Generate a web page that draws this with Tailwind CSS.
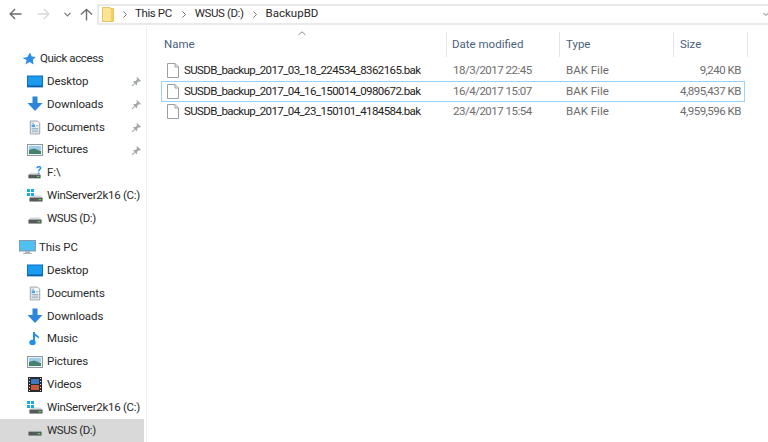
<!DOCTYPE html>
<html><head><meta charset="utf-8"><script src="https://cdn.jsdelivr.net/npm/@tailwindcss/browser@4"></script></head>
<body class="m-0">
<svg width="0" height="0" class="absolute">
<defs>
<symbol id="pin" viewBox="0 0 12 12"><path d="M6.5 1 L11 5.5 L9.8 6 L8.5 5.6 L6.6 7.6 L6.8 9.5 L6 10 L2.5 6.2 L3 5.4 L5 5.4 L6.6 3.6 L6 2z" fill="#a3a8ad"/><path d="M4 8 L1.2 10.8" stroke="#a3a8ad" stroke-width="1.2"/></symbol>
<symbol id="desk" viewBox="0 0 16 14"><rect x="0.5" y="1" width="15" height="11" fill="#1b9bf0" stroke="#0d6fc0"/><rect x="1" y="10.5" width="14" height="1.5" fill="#0a5da8"/><rect x="0" y="12" width="16" height="1" fill="#9dc4e4"/></symbol>
<symbol id="down" viewBox="0 0 16 16"><path d="M5.5 0.5 H10.5 V7 H15.5 L8 15 L0.5 7 H5.5z" fill="#2c86dc"/></symbol>
<symbol id="doc" viewBox="0 0 14 16"><path d="M1.5 0.5 H10 L12.5 3 V15.5 H1.5z" fill="#f7f9fb" stroke="#8a949c"/><path d="M3 3h3M3 9h8M3 11h8M3 13h8" stroke="#7f9db3"/><rect x="3" y="4.5" width="4" height="3" fill="#4aa3e2"/><path d="M8 6h3" stroke="#8aa0ae"/></symbol>
<symbol id="pic" viewBox="0 0 16 12"><rect x="0.5" y="0.5" width="15" height="11" fill="#eef2f5" stroke="#8f989f"/><rect x="2" y="2" width="12" height="4" fill="#9dcdea"/><path d="M2 6 L7 4.5 L14 7 V10 H2z" fill="#46806e"/></symbol>
<symbol id="drive" viewBox="0 0 16 8"><path d="M2.5 0.5 H13.5 L15.5 3.5 H0.5z" fill="#d6d9da"/><rect x="0.5" y="3" width="15" height="4.5" fill="#55595c"/><rect x="11" y="4.5" width="3" height="1.5" fill="#5ccf52"/></symbol>
<symbol id="win" viewBox="0 0 7 7"><path d="M0 0h3v3H0zM4 0h3v3H4zM0 4h3v3H0zM4 4h3v3H4z" fill="#19a9ee"/></symbol>
<symbol id="file" viewBox="0 0 12 15"><path d="M0.5 0.5 H8 L11.5 4 V14.5 H0.5z M8 0.5 V4 H11.5" fill="#fff" stroke="#9a9fa3"/></symbol>
</defs>
</svg>
<div class="w-[768px] h-[442px] overflow-hidden bg-white flex flex-col text-[11.5px] text-[#2a2a2a] whitespace-nowrap" style="font-family:Roboto,'Noto Sans',sans-serif">
  <div class="h-[26px] shrink-0 flex items-center pt-[2px]">
    <svg class="ml-[9px]" width="13" height="12" viewBox="0 0 14 13"><path d="M6.5 1 L1.2 6.5 L6.5 12 M1.2 6.5 H13.5" fill="none" stroke="#6d6d6d" stroke-width="1.5"/></svg>
    <svg class="ml-[15px]" width="13" height="12" viewBox="0 0 14 13"><path d="M7.5 1 L12.8 6.5 L7.5 12 M12.8 6.5 H0.5" fill="none" stroke="#d8d8d8" stroke-width="1.5"/></svg>
    <svg class="ml-[14px]" width="7" height="5" viewBox="0 0 7 5"><path d="M0.5 0.8 L3.5 3.8 L6.5 0.8" fill="none" stroke="#777" stroke-width="1.2"/></svg>
    <svg class="ml-[9px]" width="13" height="13" viewBox="0 0 14 13"><path d="M1 6.5 L7 1 L13 6.5 M7 1 V13" fill="none" stroke="#6d6d6d" stroke-width="1.5"/></svg>
    <div class="ml-[4px] flex-1 h-[21px] border-y-2 border-l-2 border-[#e9e9e9] flex items-center relative tracking-[-0.4px]">
      <svg class="ml-[3px] shrink-0" width="13" height="15" viewBox="0 0 13 15"><path d="M0.5 0.5 H8 V1.5 H11.5 V14.5 H0.5z" fill="#fbe594" stroke="#e5c65f"/><rect x="9" y="2" width="2" height="12" fill="#f6cf5e"/></svg>
      <svg class="ml-[8px]" width="4" height="7" viewBox="0 0 4 7"><path d="M0.5 0.5 L3.5 3.5 L0.5 6.5" fill="none" stroke="#777"/></svg>
      <span class="ml-[8px]">This PC</span>
      <svg class="ml-[10px]" width="4" height="7" viewBox="0 0 4 7"><path d="M0.5 0.5 L3.5 3.5 L0.5 6.5" fill="none" stroke="#777"/></svg>
      <span class="ml-[9px]">WSUS (D:)</span>
      <svg class="ml-[9px]" width="4" height="7" viewBox="0 0 4 7"><path d="M0.5 0.5 L3.5 3.5 L0.5 6.5" fill="none" stroke="#777"/></svg>
      <span class="ml-[9px] tracking-normal">BackupBD</span>
      <svg class="absolute right-[-1px] top-[6px]" width="6" height="5" viewBox="0 0 6 5"><path d="M0.5 1 L3 3.5 L5.5 1" fill="none" stroke="#777"/></svg>
    </div>
  </div>
  <div class="flex-1 flex min-h-0">
    <nav class="w-[147px] shrink-0 border-r border-[#f0f0f0] pt-[21.5px] tracking-[-0.1px]">
      <div class="h-[22.75px] flex items-center pl-[22px] gap-[4px]"><svg width="14" height="13" viewBox="0 0 14 13"><path d="M8 0.5 L9.8 4.6 L13.8 5 L10.8 7.8 L11.6 12.5 L7.6 10 L3.5 12.5 L4.6 8 L0.5 6 L5.4 5z" fill="#2d8fe0"/></svg><span class="tracking-[-0.4px]">Quick access</span></div>
      <div class="h-[22.75px] flex items-center pl-[27px] relative"><svg class="w-[16px] h-[14px]"><use href="#desk"/></svg><span class="ml-[4px]">Desktop</span><svg class="absolute left-[131px] top-[6px] w-[11px] h-[11px]"><use href="#pin"/></svg></div>
      <div class="h-[22.75px] flex items-center pl-[27px] relative"><svg class="w-[16px] h-[16px]"><use href="#down"/></svg><span class="ml-[4px]">Downloads</span><svg class="absolute left-[131px] top-[6px] w-[11px] h-[11px]"><use href="#pin"/></svg></div>
      <div class="h-[22.75px] flex items-center pl-[29px] relative"><svg class="w-[12px] h-[15px]"><use href="#doc"/></svg><span class="ml-[6px]">Documents</span><svg class="absolute left-[131px] top-[6px] w-[11px] h-[11px]"><use href="#pin"/></svg></div>
      <div class="h-[22.75px] flex items-center pl-[27px] relative"><svg class="w-[16px] h-[12px]"><use href="#pic"/></svg><span class="ml-[4px]">Pictures</span><svg class="absolute left-[131px] top-[6px] w-[11px] h-[11px]"><use href="#pin"/></svg></div>
      <div class="h-[22.75px] flex items-center pl-[28px] relative"><svg class="w-[13px] h-[7px] mt-[5px]"><use href="#drive"/></svg><span class="absolute left-[36px] top-[2px] text-[#1b8fe0] font-bold text-[11px]">?</span><span class="ml-[6px]">F:\</span></div>
      <div class="h-[22.75px] flex items-center pl-[27px] relative"><svg class="absolute left-[27px] top-[5px] w-[7px] h-[7px]"><use href="#win"/></svg><svg class="w-[14px] h-[7px] ml-[2px] mt-[6px]"><use href="#drive"/></svg><span class="ml-[4px] tracking-[-0.28px]">WinServer2k16 (C:)</span></div>
      <div class="h-[22.75px] flex items-center pl-[28px]"><svg class="w-[14px] h-[7px] mt-[4px]"><use href="#drive"/></svg><span class="ml-[5px] tracking-[-0.4px]">WSUS (D:)</span></div>
      <div class="h-[7px]"></div>
      <div class="h-[22.75px] flex items-center pl-[19px]"><svg width="17" height="15" viewBox="0 0 17 15"><rect x="0.5" y="0.5" width="16" height="10.5" fill="#4fc0f2" stroke="#8a99a3"/><path d="M6 11h5v2H6zM4 13h9v1H4z" fill="#aab4ba"/></svg><span class="ml-[3px]">This PC</span></div>
      <div class="h-[22.75px] flex items-center pl-[27px]"><svg class="w-[16px] h-[14px]"><use href="#desk"/></svg><span class="ml-[4px]">Desktop</span></div>
      <div class="h-[22.75px] flex items-center pl-[29px]"><svg class="w-[12px] h-[15px]"><use href="#doc"/></svg><span class="ml-[6px]">Documents</span></div>
      <div class="h-[22.75px] flex items-center pl-[27px]"><svg class="w-[16px] h-[16px]"><use href="#down"/></svg><span class="ml-[4px]">Downloads</span></div>
      <div class="h-[22.75px] flex items-center pl-[29px]"><svg width="12" height="15" viewBox="0 0 12 15"><path d="M5 1 V11" stroke="#1f8fe8" stroke-width="2"/><path d="M5 1 C6 4 11 4 10 8 C9 6 7 6 6 5z" fill="#1f8fe8"/><ellipse cx="3.5" cy="11.5" rx="3.2" ry="2.8" fill="#1f8fe8"/></svg><span class="ml-[6px]">Music</span></div>
      <div class="h-[22.75px] flex items-center pl-[27px]"><svg class="w-[16px] h-[12px]"><use href="#pic"/></svg><span class="ml-[4px]">Pictures</span></div>
      <div class="h-[22.75px] flex items-center pl-[28px]"><svg width="14" height="15" viewBox="0 0 14 15"><rect width="14" height="15" fill="#2a2a2a"/><path d="M1 1h1v1H1zM1 4h1v1H1zM1 7h1v1H1zM1 10h1v1H1zM1 13h1v1H1zM12 1h1v1h-1zM12 4h1v1h-1zM12 7h1v1h-1zM12 10h1v1h-1zM12 13h1v1h-1z" fill="#ddd"/><rect x="3" y="2" width="8" height="5" fill="#3a78c2"/><rect x="3" y="8" width="8" height="5" fill="#c8593a"/></svg><span class="ml-[5px]">Videos</span></div>
      <div class="h-[22.75px] flex items-center pl-[27px] relative"><svg class="absolute left-[27px] top-[5px] w-[7px] h-[7px]"><use href="#win"/></svg><svg class="w-[14px] h-[7px] ml-[2px] mt-[6px]"><use href="#drive"/></svg><span class="ml-[4px] tracking-[-0.28px]">WinServer2k16 (C:)</span></div>
      <div class="h-[24px] flex items-center pl-[28px] bg-[#d9d9d9] w-[144px]"><svg class="w-[14px] h-[7px] mt-[4px]"><use href="#drive"/></svg><span class="ml-[5px] tracking-[-0.4px]">WSUS (D:)</span></div>
    </nav>
    <main class="flex-1 relative pl-[14px] text-[#6d6d6d]">
      <svg class="absolute left-[151px] top-[5px]" width="8" height="5" viewBox="0 0 8 5"><path d="M0.5 4 L4 0.8 L7.5 4" fill="none" stroke="#888"/></svg>
      <div class="h-[25px] mt-[6px] grid grid-cols-[285px_113px_114px_75px] text-[#4c607a]">
        <div class="flex items-center pl-[3px]">Name</div>
        <div class="flex items-center pl-[5px] border-l border-[#e5e5e5]">Date modified</div>
        <div class="flex items-center pl-[6px] border-l border-[#e5e5e5]">Type</div>
        <div class="flex items-center pl-[6px] border-x border-[#e5e5e5]">Size</div>
      </div>
      <div class="mt-[3.5px] w-[584px]">
        <div class="h-[20.5px] border border-transparent grid grid-cols-[284px_113px_113px_72px] items-center">
          <div class="flex items-center pl-[5px] gap-[5px] text-[#222]"><svg class="w-[12px] h-[15px] shrink-0"><use href="#file"/></svg><span class="tracking-[-0.6px]">SUSDB_backup_2017_03_18_224534_8362165.bak</span></div><div class="pl-[7px] tracking-[-0.5px]">18/3/2017 22:45</div><div class="pl-[7px]">BAK File</div><div class="text-right pr-[3px] tracking-[-0.5px]">9,240 KB</div>
        </div>
        <div class="h-[20.5px] border border-[#99d1ff] grid grid-cols-[284px_113px_113px_72px] items-center">
          <div class="flex items-center pl-[5px] gap-[5px] text-[#222]"><svg class="w-[12px] h-[15px] shrink-0"><use href="#file"/></svg><span class="tracking-[-0.6px]">SUSDB_backup_2017_04_16_150014_0980672.bak</span></div><div class="pl-[7px] tracking-[-0.5px]">16/4/2017 15:07</div><div class="pl-[7px]">BAK File</div><div class="text-right pr-[3px] tracking-[-0.5px]">4,895,437 KB</div>
        </div>
        <div class="h-[20.5px] border border-transparent grid grid-cols-[284px_113px_113px_72px] items-center">
          <div class="flex items-center pl-[5px] gap-[5px] text-[#222]"><svg class="w-[12px] h-[15px] shrink-0"><use href="#file"/></svg><span class="tracking-[-0.6px]">SUSDB_backup_2017_04_23_150101_4184584.bak</span></div><div class="pl-[7px] tracking-[-0.5px]">23/4/2017 15:54</div><div class="pl-[7px]">BAK File</div><div class="text-right pr-[3px] tracking-[-0.5px]">4,959,596 KB</div>
        </div>
      </div>
    </main>
  </div>
</div>
</body></html>
